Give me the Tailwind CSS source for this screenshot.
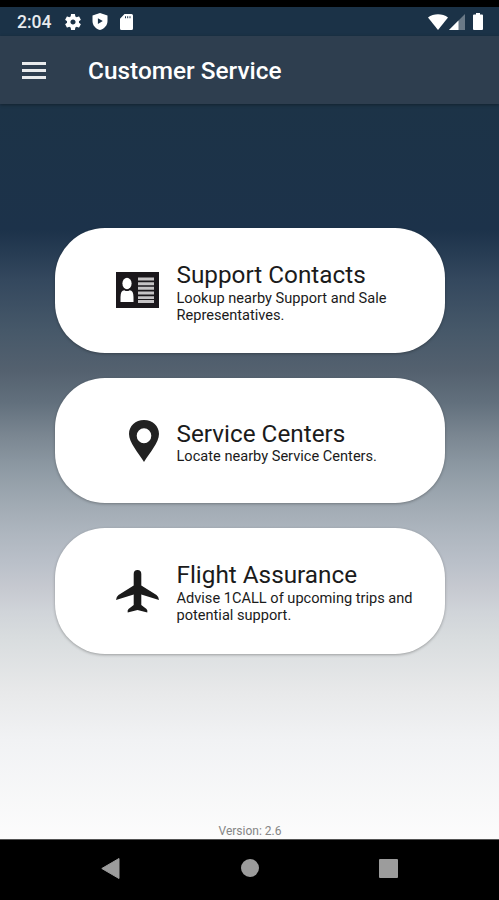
<!DOCTYPE html>
<html lang="en">
<head>
  <meta charset="UTF-8" />
  <meta name="viewport" content="width=device-width, initial-scale=1.0"/>
  <title>Customer Service</title>
  <script src="https://cdn.jsdelivr.net/npm/@tailwindcss/browser@4"></script>
</head>
<body class="bg-black font-[Roboto,sans-serif]">
  <div class="flex flex-col w-[499px] h-[900px] pt-[7px] overflow-hidden">

    <!-- Status bar -->
    <div class="flex items-center justify-between h-[29px] pl-[17px] pr-[16px] bg-[#1b3247] text-white">
      <div class="flex items-center">
        <span class="w-[48px] pt-[2px] text-[17.5px] leading-none font-medium whitespace-nowrap text-[#e8ebee]">2:04</span>
        <svg class="w-[16px] h-[16px]" viewBox="2 2 20 20" fill="currentColor">
          <path d="M19.43 12.98c.04-.32.07-.64.07-.98s-.03-.66-.07-.98l2.11-1.65c.19-.15.24-.42.12-.64l-2-3.46c-.12-.22-.39-.3-.61-.22l-2.49 1c-.52-.4-1.08-.73-1.69-.98l-.38-2.65C14.46 2.18 14.25 2 14 2h-4c-.25 0-.46.18-.49.42l-.38 2.65c-.61.25-1.17.59-1.69.98l-2.49-1c-.23-.09-.49 0-.61.22l-2 3.46c-.13.22-.07.49.12.64l2.11 1.65c-.04.32-.07.65-.07.98s.03.66.07.98l-2.11 1.65c-.19.15-.24.42-.12.64l2 3.46c.12.22.39.3.61.22l2.49-1c.52.4 1.08.73 1.69.98l.38 2.65c.03.24.24.42.49.42h4c.25 0 .46-.18.49-.42l.38-2.65c.61-.25 1.17-.59 1.69-.98l2.49 1c.23.09.49 0 .61-.22l2-3.46c.12-.22.07-.49-.12-.64l-2.11-1.65zM12 15.2c-1.770 0-3.2-1.430-3.2-3.2s1.430-3.2 3.2-3.2 3.2 1.430 3.2 3.2-1.430 3.2-3.2 3.2z"></path>
        </svg>
        <svg class="w-[16px] h-[17px] ml-[11px]" viewBox="0 0 16 17" fill="currentColor" fill-rule="evenodd">
          <path d="M8 0L15.5 2.6V8c0 4.300-3 7.700-7.500 9C3.500 15.700.5 12.300.5 8V2.600zM5.900 5.200v5.800L10.800 8.100z"></path>
        </svg>
        <svg class="w-[13px] h-[16px] ml-[12px]" viewBox="0 0 13 16" fill="currentColor" fill-rule="evenodd">
          <path d="M4.500 0H11.500A1.500 1.500 0 0 1 13 1.500V14.500A1.500 1.500 0 0 1 11.500 16H1.500A1.500 1.500 0 0 1 0 14.500V4.700zM5 2.300V4.200H6V2.300zM7.200 2.300V4.200H8.200V2.300zM9.500 2.300V4.200H10.500V2.300z"></path>
        </svg>
      </div>
      <div class="flex items-center">
        <svg class="w-[20px] h-[16px]" viewBox="0 0 20 16" fill="currentColor">
          <path d="M0 3.500C5.500-.8 14.500-.8 20 3.500L10 16z"></path>
        </svg>
        <svg class="w-[16px] h-[16px] ml-[1px]" viewBox="0 0 16 16" fill="currentColor">
          <path d="M16 0V16H0z" fill-opacity=".35"></path>
          <path d="M9.500 6.500V16H0z"></path>
        </svg>
        <svg class="w-[10px] h-[17px] ml-[8px]" viewBox="0 0 10 17" fill="currentColor">
          <path d="M3 0H7V1.500H9Q10 1.500 10 2.500V16Q10 17 9 17H1Q0 17 0 16V2.500Q0 1.500 1 1.500H3z"></path>
        </svg>
      </div>
    </div>

    <!-- App bar -->
    <header class="flex items-center h-[68px] pl-[22px] bg-[#2e3e4f] text-white shadow-[0_1px_3px_rgba(0,0,0,0.35)] z-10">
      <button class="flex flex-col gap-[4px] w-[24px]" aria-label="Menu">
        <span class="h-[3px] w-full bg-[#e9ebed]"></span>
        <span class="h-[3px] w-full bg-[#e9ebed]"></span>
        <span class="h-[3px] w-full bg-[#e9ebed]"></span>
      </button>
      <h1 class="ml-[42px] pt-[3px] text-[24.4px] leading-none font-medium">Customer Service</h1>
    </header>

    <!-- Content -->
    <main class="flex flex-col items-center h-[735px] pt-[123.700px] bg-[linear-gradient(to_bottom,#1c3347_0px,#1c324a_126px,#34485e_176px,#465869_226px,#54616f_267px,#62707d_299px,#7a8691_331px,#8d99a3_363px,#9ea8b1_395px,#adb5be_427px,#bac0c9_459px,#c6c9d0_484px,#d0d4d9_508px,#d8dcde_532px,#e8e9ea_588px,#f1f2f4_636px,#fcfcfc_734px)]">
      <div class="flex flex-col gap-[24.800px]">
        <a class="flex items-center w-[390px] h-[125.500px] pl-[60px] rounded-[50px] bg-white text-[#1b1b1b] shadow-[0_1px_3px_rgba(0,0,0,0.3)]">
          <svg class="w-[44px] h-[36px]" viewBox="0 0 44 36">
            <rect x="1" width="43" height="36" fill="#1a171b"></rect>
            <g fill="#fff">
              <ellipse cx="12" cy="11.500" rx="4.600" ry="5.700"></ellipse>
              <path d="M5.500 30V25Q5.500 18.500 9.300 18.200Q12 20 14.700 18.200Q18.500 18.500 18.500 25V30z"></path>
            </g>
            <path d="M23 7H39M23 11.700H39M23 16.300H39M23 21H39M23 25.600H39M23 29.500H39" stroke="#c5c3c5" stroke-width="2.900"></path>
          </svg>
          <div class="ml-[18px] w-[245px] pt-[4px]">
            <h2 class="text-[24.300px] leading-[28px]">Support Contacts</h2>
            <p class="mt-px text-[14.600px] leading-[17px]">Lookup nearby Support and Sale Representatives.</p>
          </div>
        </a>
        <a class="flex items-center w-[390px] h-[125.500px] pl-[60px] rounded-[50px] bg-white text-[#1b1b1b] shadow-[0_1px_3px_rgba(0,0,0,0.3)]">
          <svg class="w-[30px] h-[42px] ml-[14px]" viewBox="0 0 30 42" fill="#222" fill-rule="evenodd">
            <path d="M15 0C23.500 0 30 6 30 14C30 22.500 20.500 33 15 42C9.500 33 0 22.500 0 14C0 6 6.500 0 15 0zM15 8.300A7.300 7.500 0 0 0 15 23.300A7.300 7.500 0 0 0 15 8.300z"></path>
          </svg>
          <div class="ml-[18px] w-[245px] pt-[4px]">
            <h2 class="text-[24.300px] leading-[28px]">Service Centers</h2>
            <p class="text-[14.600px] leading-[17px]">Locate nearby Service Centers.</p>
          </div>
        </a>
        <a class="flex items-center w-[390px] h-[125.500px] pl-[60px] rounded-[50px] bg-white text-[#1b1b1b] shadow-[0_1px_3px_rgba(0,0,0,0.3)]">
          <svg class="w-[44px] h-[43px]" viewBox="0 0 44 43" fill="#1a1a1a">
            <path d="M22.500 0Q26.300 0 26.300 4V15.500L41.500 25Q44 27 44 30L26.300 24.500V35L31.500 39Q32.800 40.300 32.300 42.500L22.500 40L12.700 42.500Q12.200 40.300 13.500 39L18.700 35V24.500L1 30Q1 27 3.500 25L18.700 15.500V4Q18.700 0 22.500 0z"></path>
          </svg>
          <div class="ml-[18px] w-[245px] pt-[3px]">
            <h2 class="text-[24.300px] leading-[28px]">Flight Assurance</h2>
            <p class="mt-px text-[14.600px] leading-[17px]">Advise 1CALL of upcoming trips and potential support.</p>
          </div>
        </a>
      </div>
      <p class="mt-auto mb-[1px] ml-[1px] text-[12px] leading-[14px] text-[#858585]">Version: 2.6</p>
    </main>

    <!-- Navigation bar -->
    <nav class="flex flex-1 items-start justify-between pt-[18px] pl-[101px] pr-[101px] bg-black border-t border-[#555]">
      <svg class="w-[19px] h-[21px]" viewBox="0 0 19 21" fill="#9c9c9c">
        <path d="M18 .5V20.500L.8 10.500z" stroke="#9c9c9c" stroke-linejoin="round"></path>
      </svg>
      <span class="w-[18px] h-[18px] mt-[1px] ml-[1px] rounded-full bg-[#9c9c9c]"></span>
      <span class="w-[19px] h-[19px] mt-[1px] rounded-[1px] bg-[#9c9c9c]"></span>
    </nav>
  </div>
</body>
</html>
